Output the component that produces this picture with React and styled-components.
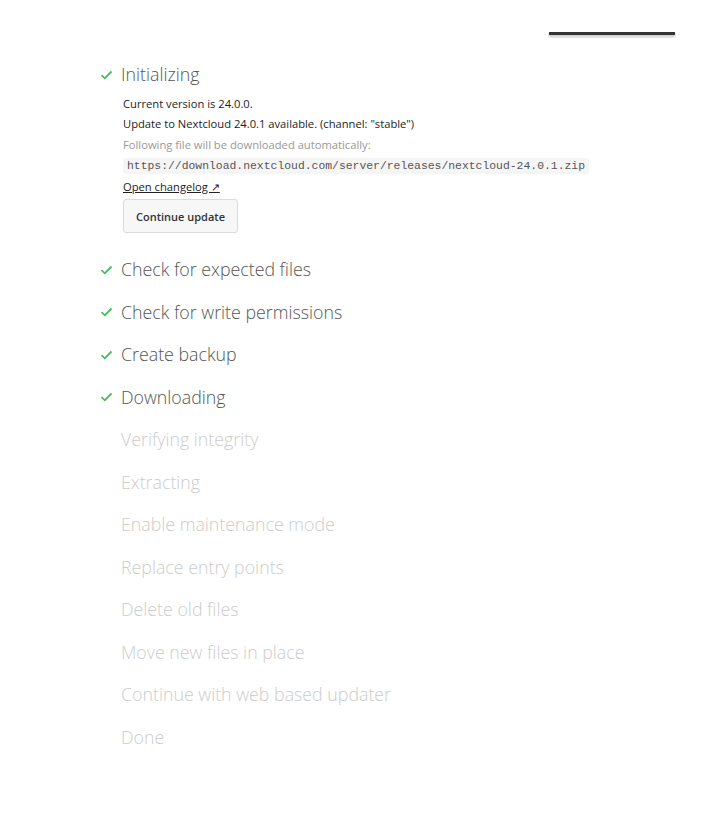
import React from 'react';
import styled, { createGlobalStyle } from 'styled-components';

const GlobalStyle = createGlobalStyle`
  html, body {
    margin: 0;
    padding: 0;
    background: #fff;
  }
  body {
    font-family: "Open Sans", "Noto Sans", sans-serif;
    color: #222;
  }
`;

const steps = [
  { label: 'Initializing', done: true, details: true },
  { label: 'Check for expected files', done: true },
  { label: 'Check for write permissions', done: true },
  { label: 'Create backup', done: true },
  { label: 'Downloading', done: true },
  { label: 'Verifying integrity' },
  { label: 'Extracting' },
  { label: 'Enable maintenance mode' },
  { label: 'Replace entry points' },
  { label: 'Delete old files' },
  { label: 'Move new files in place' },
  { label: 'Continue with web based updater' },
  { label: 'Done' },
];

function CheckIcon() {
  return (
    <svg width="13" height="10" viewBox="0 0 13 10">
      <path d="M1.5 5.2 L4.8 8.3 L11.5 1.5" fill="none" stroke="#46ba61" strokeWidth="1.8" />
    </svg>
  );
}

function Details() {
  return (
    <DetailBox>
      <Line>Current version is 24.0.0.</Line>
      <Line>Update to Nextcloud 24.0.1 available. (channel: "stable")</Line>
      <Line muted>Following file will be downloaded automatically:</Line>
      <Line>
        <Code>https://download.nextcloud.com/server/releases/nextcloud-24.0.1.zip</Code>
      </Line>
      <Line>
        <Changelog href="#">Open changelog ↗</Changelog>
      </Line>
      <Button>Continue update</Button>
    </DetailBox>
  );
}

export default function App() {
  return (
    <Page>
      <GlobalStyle />
      <Header>
        <HeaderBar />
      </Header>
      <StepList>
        {steps.map((step) => (
          <Step key={step.label}>
            <StepHead>
              <IconSlot>{step.done && <CheckIcon />}</IconSlot>
              <StepTitle done={step.done}>{step.label}</StepTitle>
            </StepHead>
            {step.details && <Details />}
          </Step>
        ))}
      </StepList>
    </Page>
  );
}

const Page = styled.div`
  width: 707px;
  min-height: 813px;
`;

const Header = styled.div`
  display: flex;
  justify-content: flex-end;
  padding: 32px 32px 0 0;
  height: 3px;
`;

const HeaderBar = styled.div`
  width: 126px;
  height: 3px;
  background: #333;
  box-shadow: 0 2px 3px rgba(0, 0, 0, 0.25);
`;

const StepList = styled.ul`
  list-style: none;
  margin: 0;
  padding: 18px 0 0 100px;
`;

const Step = styled.li`
  display: flex;
  flex-direction: column;
`;

const StepHead = styled.div`
  display: flex;
  align-items: center;
  height: 42.5px;
`;

const IconSlot = styled.span`
  display: flex;
  width: 21px;
  padding-top: 1px;
`;

const StepTitle = styled.span`
  font-size: 17.8px;
  font-weight: 300;
  color: ${(p) => (p.done ? '#555' : '#ccc')};
`;

const DetailBox = styled.div`
  display: flex;
  flex-direction: column;
  align-items: flex-start;
  padding: 0 0 15px 23px;
  margin-top: -2px;
`;

const Line = styled.div`
  font-size: 11.2px;
  line-height: 20.5px;
  color: ${(p) => (p.muted ? '#999' : '#222')};
`;

const Code = styled.code`
  font-family: "Liberation Mono", "DejaVu Sans Mono", monospace;
  font-size: 11.4px;
  color: #555;
  background: #f5f5f5;
  padding: 2px 4px;
  border-radius: 3px;
`;

const Changelog = styled.a`
  color: #222;
  text-decoration: underline;
`;

const Button = styled.button`
  margin-top: 2px;
  height: 34px;
  padding: 0 12px;
  font-family: inherit;
  font-size: 11px;
  font-weight: 600;
  color: #333;
  background: #f7f7f7;
  border: 1px solid #dbdbdb;
  border-radius: 3px;
`;
